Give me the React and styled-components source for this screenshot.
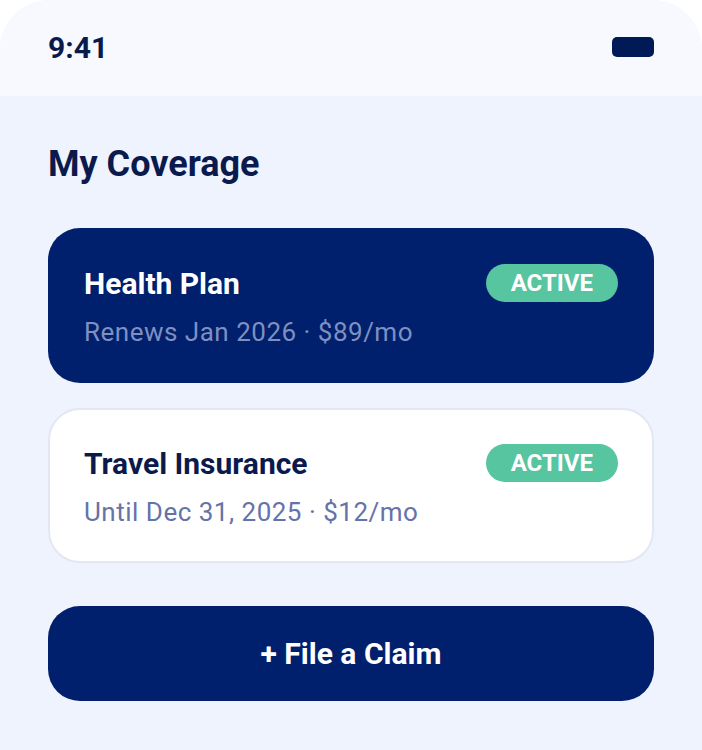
import styled, { createGlobalStyle } from "styled-components";

const GlobalStyle = createGlobalStyle`
  html, body {
    margin: 0;
    padding: 0;
    background: #ffffff;
  }
  * {
    box-sizing: border-box;
  }
`;

const plans = [
  { id: 1, name: "Health Plan", info: "Renews Jan 2026 · $89/mo", featured: true },
  { id: 2, name: "Travel Insurance", info: "Until Dec 31, 2025 · $12/mo", featured: false },
];

const App = () => {
  return (
    <>
      <GlobalStyle />
      <Phone>
        <StatusBar>
          <Time>9:41</Time>
          <Battery />
        </StatusBar>
        <Content>
          <Heading>My Coverage</Heading>
          <CardList>
            {plans.map((plan) => (
              <Card key={plan.id} $featured={plan.featured}>
                <CardHeader>
                  <PlanName $featured={plan.featured}>{plan.name}</PlanName>
                  <Badge>ACTIVE</Badge>
                </CardHeader>
                <PlanInfo $featured={plan.featured}>{plan.info}</PlanInfo>
              </Card>
            ))}
          </CardList>
          <ClaimButton>+ File a Claim</ClaimButton>
        </Content>
      </Phone>
    </>
  );
};

export default App;

const Phone = styled.div`
  width: 702px;
  height: 750px;
  border-radius: 50px 50px 0 0;
  overflow: hidden;
  background: #eff3fe;
  font-family: Roboto, "Liberation Sans", sans-serif;
  display: flex;
  flex-direction: column;
`;

const StatusBar = styled.div`
  height: 96px;
  flex-shrink: 0;
  background: #f7f9ff;
  display: flex;
  align-items: center;
  justify-content: space-between;
  padding: 0 48px 2px 48px;
`;

const Time = styled.span`
  font-size: 30px;
  font-weight: 700;
  color: #0b1a4d;
`;

const Battery = styled.div`
  width: 42px;
  height: 20px;
  border-radius: 5px;
  background: #001a57;
`;

const Content = styled.div`
  padding: 46px 48px 0;
  display: flex;
  flex-direction: column;
`;

const Heading = styled.h1`
  margin: 0 0 42px;
  font-size: 36px;
  line-height: 44px;
  font-weight: 700;
  color: #0b1a4d;
`;

const CardList = styled.div`
  display: flex;
  flex-direction: column;
  gap: 25px;
`;

const Card = styled.div`
  border-radius: 32px;
  padding: ${(p) => (p.$featured ? "36px" : "34px")};
  background: ${(p) => (p.$featured ? "#001f6d" : "#ffffff")};
  border: ${(p) => (p.$featured ? "none" : "2px solid #e3e7f3")};
  display: flex;
  flex-direction: column;
  gap: 15px;
`;

const CardHeader = styled.div`
  display: flex;
  align-items: center;
  justify-content: space-between;
`;

const PlanName = styled.span`
  font-size: 30px;
  font-weight: 700;
  color: ${(p) => (p.$featured ? "#ffffff" : "#0b1a4d")};
`;

const Badge = styled.span`
  height: 38px;
  padding: 0 25px;
  border-radius: 19px;
  background: #57c5a0;
  color: #ffffff;
  font-size: 24px;
  font-weight: 700;
  display: flex;
  align-items: center;
`;

const PlanInfo = styled.span`
  font-size: 26px;
  line-height: 30px;
  letter-spacing: 0.5px;
  color: ${(p) => (p.$featured ? "#7f8fc0" : "#6573a8")};
`;

const ClaimButton = styled.button`
  margin-top: 43px;
  height: 95px;
  border: none;
  border-radius: 32px;
  background: #001f6d;
  color: #ffffff;
  font-family: inherit;
  font-size: 30px;
  font-weight: 700;
  cursor: pointer;
`;
